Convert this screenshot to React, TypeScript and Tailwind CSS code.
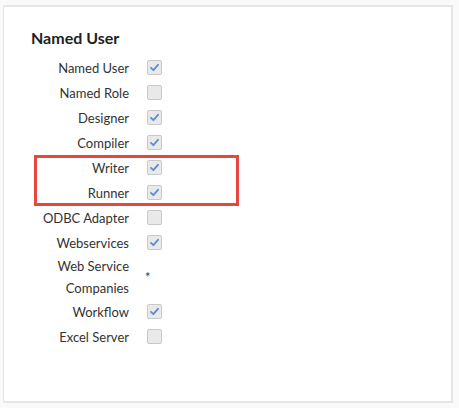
import React from "react";

interface Row {
  label: string;
  state: "on" | "off" | "na";
}

const rowsTop: Row[] = [
  { label: "Named User", state: "on" },
  { label: "Named Role", state: "off" },
  { label: "Designer", state: "on" },
  { label: "Compiler", state: "on" },
];

const rowsBoxed: Row[] = [
  { label: "Writer", state: "on" },
  { label: "Runner", state: "on" },
];

const rowsBottom: Row[] = [
  { label: "ODBC Adapter", state: "off" },
  { label: "Webservices", state: "on" },
  { label: "Web Service Companies", state: "na" },
  { label: "Workflow", state: "on" },
  { label: "Excel Server", state: "off" },
];

const Check: React.FC<{ checked: boolean }> = ({ checked }) => (
  <span className="flex h-[15px] w-[15px] items-center justify-center rounded-[2px] border border-[#c9c9c9] bg-[#e9e9e9]">
    {checked && (
      <svg width="11" height="11" viewBox="0 0 11 11" fill="none">
        <path
          d="M2 5.8 L4.4 8.2 L9 2.8"
          stroke="#5b8ed6"
          strokeWidth="1.8"
          strokeLinecap="round"
          strokeLinejoin="round"
        />
      </svg>
    )}
  </span>
);

const PermRow: React.FC<{ row: Row }> = ({ row }) => {
  const na = row.state === "na";
  return (
    <div className="flex items-center gap-[18px]">
      <div
        className={
          "w-[98px] text-right text-[13px] leading-[22px] text-[#333] " + (na ? "py-0" : "py-[1.5px]")
        }
      >
        {row.label}
      </div>
      {na ? (
        <span className="-ml-[2px] text-[13px] leading-[22px] text-[#2c3e66]">*</span>
      ) : (
        <Check checked={row.state === "on"} />
      )}
    </div>
  );
};

export default function App() {
  return (
    <div
      className="h-[408px] w-[459px] bg-[#fafafa] pl-[3px] pt-[5px]"
      style={{ fontFamily: "Lato, 'Open Sans', sans-serif" }}
    >
      <div className="h-[398px] w-[450px] border-b-2 border-l border-r-2 border-t-2 border-[#e6e6e6] bg-white px-[27px] pt-5">
        <h2 className="text-[16px] font-bold leading-[22px] text-[#222]">Named User</h2>
        <div className="mt-[6px] flex flex-col">
          {rowsTop.map((r) => (
            <PermRow key={r.label} row={r} />
          ))}
          <div className="relative">
            {rowsBoxed.map((r) => (
              <PermRow key={r.label} row={r} />
            ))}
            <span className="pointer-events-none absolute left-[3px] top-0 h-[51px] w-[205px] border-[3px] border-[#e8473f]" />
          </div>
          {rowsBottom.map((r) => (
            <PermRow key={r.label} row={r} />
          ))}
        </div>
      </div>
    </div>
  );
}
